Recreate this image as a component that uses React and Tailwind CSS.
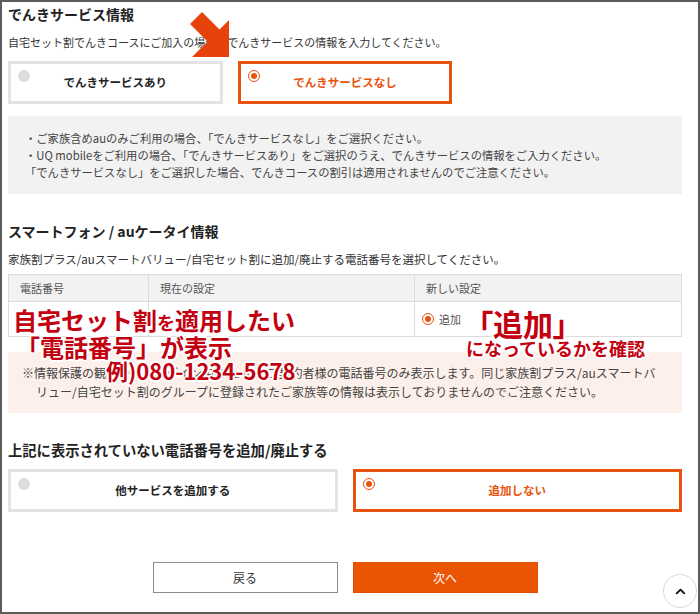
import React from 'react';
import { ChevronUp } from 'lucide-react';

const ORANGE = 'border-[#e8530e]';

const Radio = ({ checked }) =>
  checked ? (
    <span className="flex items-center justify-center w-[12px] h-[12px] rounded-full border-[1.5px] border-[#e8530e] bg-white">
      <span className="w-[6px] h-[6px] rounded-full bg-[#e8530e]" />
    </span>
  ) : (
    <span className="block w-[12px] h-[12px] rounded-full bg-[#dcdcdc]" />
  );

const ChoiceBox = ({ label, checked }) => (
  <div
    className={`relative flex items-center justify-center h-[43px] bg-white border-[3px] ${
      checked ? ORANGE : 'border-[#e4e4e4]'
    }`}
  >
    <span className="absolute left-[7px] top-[6px]">
      <Radio checked={checked} />
    </span>
    <span className={`text-[11.5px] font-bold ${checked ? 'text-[#e8530e]' : 'text-[#222]'}`}>{label}</span>
  </div>
);

// 注釈テキスト (赤字+白フチ)
const note =
  'absolute font-bold text-[#c3000f] whitespace-nowrap leading-none [text-shadow:0_0_2px_#fff,2px_0_0_#fff,-2px_0_0_#fff,0_2px_0_#fff,0_-2px_0_#fff,1px_1px_0_#fff,-1px_-1px_0_#fff,1px_-1px_0_#fff,-1px_1px_0_#fff]';

export default function App() {
  return (
    <div className="relative w-[700px] h-[614px] overflow-hidden bg-white border-2 border-[#5c5c5c] pl-[6px] pr-4 font-['Noto_Sans_CJK_JP','Noto_Sans',sans-serif] text-[#333]">
      {/* でんきサービス情報 */}
      <h2 className="mt-[2px] text-[14px] leading-[20px] font-bold text-[#222]">でんきサービス情報</h2>
      <p className="mt-[10px] text-[11px] leading-[16px]">
        自宅セット割でんきコースにご加入の場合、でんきサービスの情報を入力してください。
      </p>
      <div className="mt-[11px] grid grid-cols-3 gap-[15px]">
        <ChoiceBox label="でんきサービスあり" />
        <ChoiceBox label="でんきサービスなし" checked />
      </div>

      <div className="mt-[12px] bg-[#f2f2f2] pl-[17px] pt-[14px] pb-[13px] text-[11.3px] leading-[17px] text-[#444]">
        <p>・ご家族含めauのみご利用の場合、「でんきサービスなし」をご選択ください。</p>
        <p>・UQ mobileをご利用の場合、「でんきサービスあり」をご選択のうえ、でんきサービスの情報をご入力ください。</p>
        <p>「でんきサービスなし」をご選択した場合、でんきコースの割引は適用されませんのでご注意ください。</p>
      </div>

      {/* スマートフォン / auケータイ情報 */}
      <h2 className="mt-[27px] text-[14px] leading-[20px] font-bold text-[#222]">スマートフォン / auケータイ情報</h2>
      <p className="mt-[10px] text-[11.5px] leading-[16px]">
        家族割プラス/auスマートバリュー/自宅セット割に追加/廃止する電話番号を選択してください。
      </p>

      <div className="mt-[7px] border border-[#dcdcdc] text-[11px] text-[#555]">
        <div className="grid grid-cols-[140px_266px_1fr] h-[27px] bg-[#f2f2f2] border-b border-[#dcdcdc]">
          <div className="flex items-center px-[11px] border-r border-[#dcdcdc]">電話番号</div>
          <div className="flex items-center px-[11px] border-r border-[#dcdcdc]">現在の設定</div>
          <div className="flex items-center px-[11px]">新しい設定</div>
        </div>
        <div className="grid grid-cols-[140px_266px_1fr] h-[34px]">
          <div className="border-r border-[#dcdcdc]" />
          <div className="border-r border-[#dcdcdc]" />
          <div className="flex items-center gap-[5px] pl-[7px]">
            <Radio checked />
            <span>追加</span>
          </div>
        </div>
      </div>

      <div className="mt-[15px] bg-[#fdf0ea] pt-[11px] pb-[12px] pl-[14px] text-[12px] leading-[19px] text-[#444] whitespace-nowrap">
        <p>※情報保護の観点から、ログイン中のau IDのご契約者様の電話番号のみ表示します。同じ家族割プラス/auスマートバ</p>
        <p className="pl-[14px]">リュー/自宅セット割のグループに登録されたご家族等の情報は表示しておりませんのでご注意ください。</p>
      </div>

      {/* 追加/廃止 */}
      <h2 className="mt-[27px] text-[14.3px] leading-[20px] font-bold text-[#222]">上記に表示されていない電話番号を追加/廃止する</h2>
      <div className="mt-[9px] grid grid-cols-2 gap-[15px]">
        <ChoiceBox label="他サービスを追加する" />
        <ChoiceBox label="追加しない" checked />
      </div>

      <div className="mt-[50px] flex justify-center gap-[15px]">
        <button className="w-[185px] h-[31px] bg-white border border-[#8c8c8c] text-[12px] text-[#333]">戻る</button>
        <button className="w-[185px] h-[31px] bg-[#ea5504] border border-[#e14f02] text-[12px] text-white">次へ</button>
      </div>

      <button className="absolute right-[1px] bottom-[4px] flex items-center justify-center w-[34px] h-[34px] rounded-full bg-white border border-[#dadada]">
        <ChevronUp className="w-[15px] h-[15px] text-[#111]" strokeWidth={3} />
      </button>

      {/* 矢印 */}
      <svg className="absolute left-[183px] top-[8px]" width="50" height="52" viewBox="185 10 50 52">
        <polygon
          fill="#e8420c"
          points="202,12 219.5,29.5 229,20 229,57 192,57 207.5,41.5 190,24"
        />
      </svg>

      {/* 注釈 */}
      <div className={`${note} left-[11px] top-[306px] text-[24px]`}>
        自宅セット割<span className="text-[18px]">を</span>適用したい
      </div>
      <div className={`${note} left-[14px] top-[333px] text-[24px]`}>「電話番号」が表示</div>
      <div className={`${note} left-[104px] top-[357px] text-[22px]`}>例)080-1234-5678</div>
      <div className={`${note} left-[476px] top-[306px] text-[30px] [font-feature-settings:'palt']`}>「追加」</div>
      <div className={`${note} left-[464px] top-[337px] text-[18px]`}>になっているかを確認</div>
    </div>
  );
}
